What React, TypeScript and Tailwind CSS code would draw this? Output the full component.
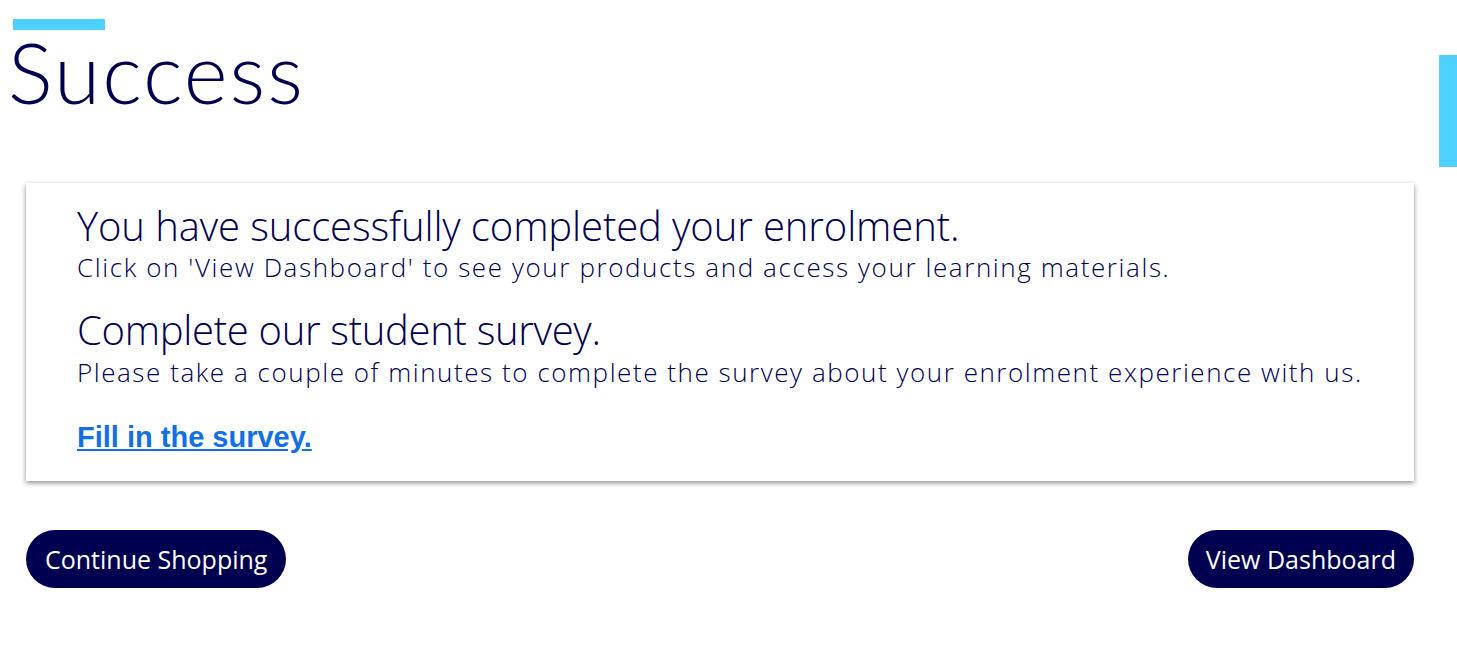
import React from "react";

export default function App() {
  return (
    <div className="relative min-h-[648px] w-full bg-white font-['Open_Sans',sans-serif] text-[#000050]">
      <div className="absolute right-0 top-[55px] h-[112px] w-[18px] bg-[#4fd1ff]" />
      <div className="pl-[8px] pt-[19px]">
        <div className="ml-[5px] h-[11px] w-[92px] bg-[#4fd1ff]" />
        <h1 className="-mt-[2px] font-['Lato',sans-serif] text-[84px] font-light leading-[88px] tracking-[2px]">Success</h1>
      </div>
      <div className="mt-[67px] ml-[26px] mr-[43px] bg-white pl-[51px] pr-[40px] pt-[20px] pb-[28px] shadow-[0_2px_5px_rgba(0,0,0,0.45)]">
        <h2 className="text-[40px] font-light leading-[46px] tracking-[-0.1px]">You have successfully completed your enrolment.</h2>
        <p className="text-[26px] font-light leading-[36px] tracking-[1.6px]">Click on 'View Dashboard' to see your products and access your learning materials.</p>
        <h2 className="mt-[22px] text-[40px] font-light leading-[46px] tracking-[-0.3px]">Complete our student survey.</h2>
        <p className="mt-[1px] whitespace-nowrap text-[26px] font-light leading-[36px] tracking-[1.55px]">Please take a couple of minutes to complete the survey about your enrolment experience with us.</p>
        <p className="mt-[31px] font-['Liberation_Sans',Arial,sans-serif] text-[29px] font-bold leading-[32px]">
          <a href="#" className="text-[#1170e4] underline">Fill in the survey.</a>
        </p>
      </div>
      <div className="mt-[49px] ml-[26px] mr-[43px] flex justify-between">
        <button className="h-[58px] rounded-full bg-[#000050] px-[19px] text-[25px] leading-[58px] text-white">Continue Shopping</button>
        <button className="h-[58px] rounded-full bg-[#000050] px-[18px] text-[25px] leading-[58px] text-white">View Dashboard</button>
      </div>
    </div>
  );
}
